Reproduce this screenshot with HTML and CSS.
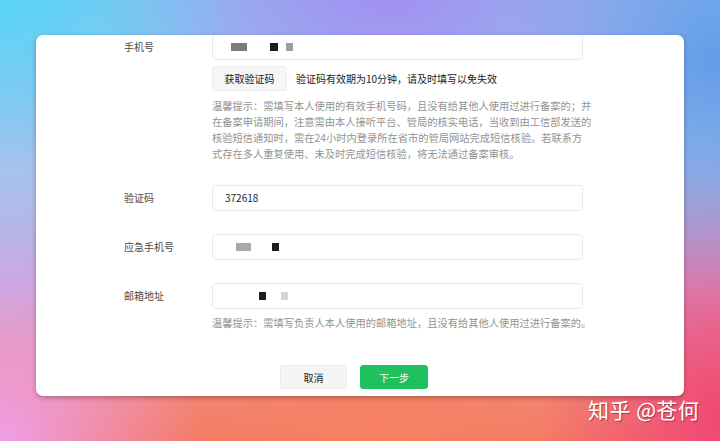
FILE: index.html
```html
<!DOCTYPE html>
<html lang="zh-CN">
<head>
<meta charset="utf-8">
<title>备案信息</title>
<link rel="stylesheet" href="styles.css">
</head>
<body>
<div class="card">
  <div class="row first">
    <div class="label">手机号</div>
    <div class="field">
      <div class="input masked">
        <span class="px g1" style="margin-left:18px;width:16px"></span>
        <span class="px k" style="margin-left:23px;width:8px"></span>
        <span class="px g2" style="margin-left:8px;width:7px"></span>
      </div>
      <div class="code-row">
        <button class="btn-code">获取验证码</button>
        <span class="code-tip">验证码有效期为10分钟，请及时填写以免失效</span>
      </div>
      <div class="hint">
        <span class="line">温馨提示：需填写本人使用的有效手机号码，且没有给其他人使用过进行备案的；并</span>
        <span class="line">在备案申请期间，注意需由本人接听平台、管局的核实电话，当收到由工信部发送的</span>
        <span class="line">核验短信通知时，需在24小时内登录所在省市的管局网站完成短信核验。若联系方</span>
        <span class="line">式存在多人重复使用、未及时完成短信核验，将无法通过备案审核。</span>
      </div>
    </div>
  </div>
  <div class="row gap-l">
    <div class="label">验证码</div>
    <div class="field">
      <div class="input">372618</div>
    </div>
  </div>
  <div class="row gap-l">
    <div class="label">应急手机号</div>
    <div class="field">
      <div class="input masked">
        <span class="px g3" style="margin-left:23px;width:15px"></span>
        <span class="px k" style="margin-left:21px;width:7px"></span>
      </div>
    </div>
  </div>
  <div class="row gap-l">
    <div class="label">邮箱地址</div>
    <div class="field">
      <div class="input masked">
        <span class="px k" style="margin-left:46px;width:7px"></span>
        <span class="px g4" style="margin-left:15px;width:7px"></span>
      </div>
      <div class="hint single">温馨提示：需填写负责人本人使用的邮箱地址，且没有给其他人使用过进行备案的。</div>
    </div>
  </div>
  <div class="footer">
    <button class="btn-cancel">取消</button>
    <button class="btn-next">下一步</button>
  </div>
</div>
<div class="watermark">知乎 @苍何</div>
</body>
</html>
```
FILE: styles.css
```css
html, body {
  margin: 0;
  padding: 0;
}
body {
  width: 720px;
  height: 441px;
  overflow: hidden;
  position: relative;
  font-family: "Noto Sans CJK SC", "Noto Sans", sans-serif;
  background:
    radial-gradient(ellipse 240px 170px at 0px 0px, rgba(88, 214, 248, 1), rgba(88, 214, 248, 0) 100%),
    radial-gradient(ellipse 300px 150px at 390px 0px, rgba(165, 138, 242, 0.9), rgba(165, 138, 242, 0) 100%),
    radial-gradient(ellipse 220px 230px at 720px 60px, rgba(100, 156, 232, 1), rgba(100, 156, 232, 0) 100%),
    radial-gradient(ellipse 180px 280px at 720px 420px, rgba(240, 72, 118, 1), rgba(240, 72, 118, 0) 100%),
    radial-gradient(ellipse 200px 200px at 0px 441px, rgba(238, 160, 232, 1), rgba(238, 160, 232, 0) 100%),
    radial-gradient(ellipse 380px 150px at 380px 441px, rgba(248, 130, 96, 1), rgba(248, 130, 96, 0) 100%),
    linear-gradient(180deg, #8fc0ee 0%, #a8c2ec 40%, #c6a9e2 65%, #ee8a86 88%, #f27468 100%);
}
.card {
  margin: 35px 0 0 36px;
  width: 648px;
  height: 361px;
  background: #fff;
  border-radius: 7px;
  box-shadow: 0 2px 5px rgba(60, 20, 20, 0.35);
  overflow: hidden;
  box-sizing: border-box;
  padding-left: 88px;
  color: #333;
  font-size: 10px;
}
.row {
  display: flex;
}
.row.first {
  margin-top: -1px;
}
.row.gap-l {
  margin-top: 23px;
}
.label {
  width: 88px;
  line-height: 26px;
  color: #4a4a4a;
  font-size: 10px;
}
.field {
  width: 371px;
}
.input {
  height: 26px;
  box-sizing: border-box;
  border: 1px solid #e9e9e9;
  border-radius: 4px;
  padding-left: 12px;
  line-height: 24px;
  font-size: 10px;
  color: #222;
  display: flex;
  align-items: center;
}
.input.masked {
  padding-left: 0;
}
.px {
  display: inline-block;
  height: 8px;
}
.px.g1 { background: #7c7c7c; }
.px.g2 { background: #9e9e9e; }
.px.g3 { background: #a8a8a8; }
.px.g4 { background: #d4d4d4; }
.px.k { background: #1c1c1c; }
.code-row {
  margin-top: 6px;
  display: flex;
  align-items: center;
}
.btn-code {
  width: 75px;
  height: 25px;
  box-sizing: border-box;
  background: #f6f6f6;
  border: 1px solid #ececec;
  border-radius: 3px;
  font-family: inherit;
  font-size: 10px;
  color: #222;
  padding: 0;
}
.code-tip {
  margin-left: 9px;
  color: #222;
  font-size: 10px;
}
.hint {
  margin-top: 7px;
  color: #939393;
  font-size: 10.25px;
  line-height: 16px;
}
.hint .line {
  display: block;
  white-space: nowrap;
}
.hint.single {
  margin-top: 6px;
  white-space: nowrap;
}
.footer {
  margin-top: 34px;
  display: flex;
  gap: 13px;
}
.footer button {
  height: 24px;
  box-sizing: border-box;
  border-radius: 3px;
  font-family: inherit;
  font-size: 10px;
  padding: 0;
}
.btn-cancel {
  margin-left: 156px;
  width: 67px;
  background: #f5f5f5;
  border: 1px solid #ececec;
  color: #222;
}
.btn-next {
  width: 68px;
  background: #1ec15e;
  border: 1px solid #1ec15e;
  color: #fff;
}
.watermark {
  position: absolute;
  left: 588px;
  top: 395px;
  color: #fff;
  font-size: 21px;
  line-height: 28px;
  letter-spacing: 0.5px;
  text-shadow: 1px 1px 1px rgba(90, 30, 30, 0.55);
}
```
